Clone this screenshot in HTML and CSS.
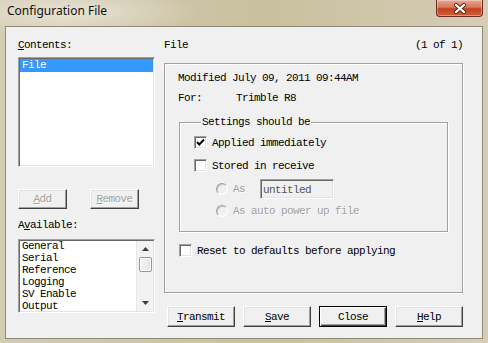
FILE: index.html
```html
<!DOCTYPE html>
<html lang="en">
<head>
<meta charset="UTF-8">
<title>Configuration File</title>
<link rel="stylesheet" href="styles.css">
</head>
<body>
<div class="window">
    <div class="titlebar">
        <span class="title">Configuration File</span>
        <div class="close-btn">
            <svg width="16" height="11" viewBox="0 0 16 11">
                <path d="M4 2 L12 9 M12 2 L4 9" stroke="#4a2a22" stroke-width="4" stroke-linecap="round"/>
                <path d="M4 2 L12 9 M12 2 L4 9" stroke="#ffffff" stroke-width="2.2" stroke-linecap="round"/>
            </svg>
        </div>
    </div>

    <div class="client">
        <div class="left-col">
            <div class="label"><u>C</u>ontents:</div>
            <div class="listbox contents-list">
                <div class="item selected">File</div>
            </div>
            <div class="list-buttons">
                <button class="btn small" disabled><u>A</u>dd</button>
                <button class="btn small" disabled><u>R</u>emove</button>
            </div>
            <div class="label available-label">A<u>v</u>ailable:</div>
            <div class="listbox available-list">
                <div class="items">
                    <div class="item">General</div>
                    <div class="item">Serial</div>
                    <div class="item">Reference</div>
                    <div class="item">Logging</div>
                    <div class="item">SV Enable</div>
                    <div class="item">Output</div>
                </div>
                <div class="scrollbar">
                    <div class="arrow">
                        <svg width="7" height="4" viewBox="0 0 7 4"><polygon points="3.5,0 7,4 0,4" fill="#3c3c3c"/></svg>
                    </div>
                    <div class="thumb"></div>
                    <div class="track"></div>
                    <div class="arrow">
                        <svg width="7" height="4" viewBox="0 0 7 4"><polygon points="0,0 7,0 3.5,4" fill="#3c3c3c"/></svg>
                    </div>
                </div>
            </div>
        </div>

        <div class="right-col">
            <div class="header-row">
                <span>File</span>
                <span>(1 of 1)</span>
            </div>
            <div class="panel">
                <div class="info-row">Modified July 09, 2011 09:44AM</div>
                <div class="info-row for-row"><span class="info-key">For:</span>Trimble R8</div>

                <fieldset class="settings">
                    <legend>Settings should be</legend>
                    <div class="opt-row first">
                        <span class="checkbox">
                            <svg width="11" height="11" viewBox="0 0 11 11"><path d="M2 5 L4.3 7.5 L9 2.5" fill="none" stroke="#000" stroke-width="1.9"/></svg>
                        </span>
                        <span class="opt-text">Applied immediately</span>
                    </div>
                    <div class="opt-row">
                        <span class="checkbox"></span>
                        <span class="opt-text">Stored in receive</span>
                    </div>
                    <div class="opt-row radio-row as-row">
                        <span class="radio"></span>
                        <span class="opt-text disabled">As</span>
                        <span class="textbox">untitled</span>
                    </div>
                    <div class="opt-row radio-row auto-row">
                        <span class="radio"></span>
                        <span class="opt-text disabled">As auto power up file</span>
                    </div>
                </fieldset>

                <div class="opt-row reset-row">
                    <span class="checkbox"></span>
                    <span class="opt-text">Reset to defaults before applying</span>
                </div>
            </div>

            <div class="action-buttons">
                <button class="btn"><u>T</u>ransmit</button>
                <button class="btn"><u>S</u>ave</button>
                <button class="btn default">Close</button>
                <button class="btn"><u>H</u>elp</button>
            </div>
        </div>
    </div>
</div>
</body>
</html>
```

FILE: styles.css
```css
body {
    margin: 0;
    width: 488px;
    height: 343px;
    overflow: hidden;
}
.window {
    width: 488px;
    height: 343px;
    box-sizing: border-box;
    display: flex;
    flex-direction: column;
    background:
        radial-gradient(ellipse 130px 26px at 70px 12px, rgba(255, 255, 255, 0.5), rgba(255, 255, 255, 0)),
        linear-gradient(to right, #d3cbb2, #c9c09f 55%, #d5cdb5);
}
.titlebar {
    height: 26px;
    display: flex;
    align-items: flex-start;
    flex-shrink: 0;
}
.title {
    font-family: "Noto Sans", sans-serif;
    font-size: 12px;
    line-height: 16px;
    color: #111;
    margin: 3px 0 0 7px;
}
.close-btn {
    margin-left: auto;
    margin-right: 5px;
    width: 47px;
    height: 17px;
    box-sizing: border-box;
    border: 1px solid #6e2c1f;
    border-top: none;
    border-radius: 0 0 4px 4px;
    background: linear-gradient(to bottom, #e8a690, #d6775c 45%, #c2401f 55%, #d45d3a);
    box-shadow: inset 0 0 0 1px rgba(255, 255, 255, 0.35);
    display: flex;
    align-items: center;
    justify-content: center;
}

/* dialog body */
.client {
    margin: 0 5px;
    height: 313px;
    box-sizing: border-box;
    background: #f0f0f0;
    border: 1px solid #8f8a77;
    display: flex;
    gap: 9px;
    padding-left: 12px;
    font-family: "Liberation Mono", monospace;
    font-size: 11px;
    letter-spacing: -0.6px;
    line-height: 12px;
    color: #000;
}
.left-col {
    width: 137px;
    display: flex;
    flex-direction: column;
}
.right-col {
    width: 299px;
    display: flex;
    flex-direction: column;
}
.label {
    margin-top: 12px;
    height: 12px;
}
.available-label {
    margin-top: 10px;
}
u {
    text-decoration: underline;
    text-underline-offset: 1px;
}

.listbox {
    box-sizing: border-box;
    background: #fff;
    border: 1px solid;
    border-color: #a0a0a0 #fff #fff #a0a0a0;
    box-shadow: inset 1px 1px #696969, inset -1px -1px #e3e3e3;
    padding: 1px;
}
.contents-list {
    margin-top: 6px;
    height: 110px;
}
.item {
    height: 12px;
    padding-left: 2px;
    white-space: nowrap;
}
.item.selected {
    height: 13px;
    background: #3399ff;
    color: #fff;
    line-height: 13px;
}
.list-buttons {
    margin-top: 22px;
    display: flex;
    gap: 23px;
}
.available-list {
    margin-top: 8px;
    height: 74px;
    padding-top: 0;
    display: flex;
    overflow: hidden;
}
.available-list .items {
    flex: 1;
    overflow: hidden;
}
.scrollbar {
    width: 16px;
    margin-top: 1px;
    display: flex;
    flex-direction: column;
    align-items: center;
    background: #f2f2f2;
    border-left: 1px solid #e6e6e6;
}
.arrow {
    height: 16px;
    display: flex;
    align-items: center;
    justify-content: center;
}
.thumb {
    width: 13px;
    height: 15px;
    box-sizing: border-box;
    border: 1px solid #979797;
    border-radius: 2px;
    background: linear-gradient(to right, #f4f4f4, #e6e6e6);
    box-shadow: inset 0 0 0 1px #fff;
}
.track {
    flex: 1;
}

/* buttons */
.btn {
    font: inherit;
    letter-spacing: inherit;
    color: #000;
    width: 68px;
    height: 21px;
    padding: 0;
    box-sizing: border-box;
    background: #f0f0f0;
    border: 1px solid;
    border-color: #fff #404040 #404040 #fff;
    box-shadow: inset -1px -1px #a0a0a0, inset 1px 1px #e3e3e3;
}
.btn.small {
    width: 49px;
    height: 20px;
}
.btn:disabled {
    color: #a0a0a0;
    text-shadow: 1px 1px #fff;
}
.btn.default {
    border: 1px solid #000;
    box-shadow: inset 1px 1px #fff, inset -1px -1px #404040, inset -2px -2px #a0a0a0;
}

/* right side */
.header-row {
    margin-top: 12px;
    height: 12px;
    display: flex;
    justify-content: space-between;
}
.panel {
    margin-top: 12px;
    height: 230px;
    box-sizing: border-box;
    border: 1px solid #a0a0a0;
    box-shadow: inset 1px 1px #fff, 1px 1px #fff;
    padding: 8px 0 0 13px;
}
.info-row {
    height: 12px;
    white-space: nowrap;
}
.for-row {
    margin-top: 8px;
    display: flex;
}
.info-key {
    width: 58px;
}
.settings {
    margin: 12px 0 0 1px;
    width: 269px;
    box-sizing: border-box;
    padding: 8px 0 14px 14px;
    border: 1px solid #a0a0a0;
    box-shadow: inset 1px 1px #fff, 1px 1px #fff;
}
.settings legend {
    margin-left: 7px;
    padding: 0 1px;
    height: 12px;
}
.opt-row {
    display: flex;
    align-items: center;
    height: 13px;
    margin-top: 10px;
    white-space: nowrap;
}
.opt-row.first {
    margin-top: 0;
}
.checkbox {
    width: 13px;
    height: 13px;
    box-sizing: border-box;
    flex-shrink: 0;
    background: #fff;
    border: 1px solid;
    border-color: #a0a0a0 #fff #fff #a0a0a0;
    box-shadow: inset 1px 1px #696969, inset -1px -1px #e3e3e3;
    display: flex;
}
.opt-text {
    margin-left: 5px;
}
.opt-text.disabled {
    color: #a0a0a0;
    text-shadow: 1px 1px #fff;
}
.radio-row {
    padding-left: 22px;
}
.as-row {
    height: 20px;
    margin-top: 7px;
}
.auto-row {
    height: 12px;
    margin-top: 6px;
}
.radio {
    width: 12px;
    height: 12px;
    box-sizing: border-box;
    flex-shrink: 0;
    border-radius: 50%;
    border: 1px solid;
    border-color: #a0a0a0 #fff #fff #a0a0a0;
    box-shadow: inset 1px 1px #c8c8c8;
    background: #f0f0f0;
}
.textbox {
    margin-left: 15px;
    width: 74px;
    height: 20px;
    box-sizing: border-box;
    border: 1px solid;
    border-color: #a0a0a0 #fff #fff #a0a0a0;
    box-shadow: inset 1px 1px #696969, inset -1px -1px #e3e3e3;
    background: #f0f0f0;
    color: #555;
    padding: 4px 0 0 2px;
}
.reset-row {
    margin-top: 12px;
    margin-left: 1px;
}
.action-buttons {
    margin: 13px 0 0 3px;
    display: flex;
    justify-content: space-between;
}
```
